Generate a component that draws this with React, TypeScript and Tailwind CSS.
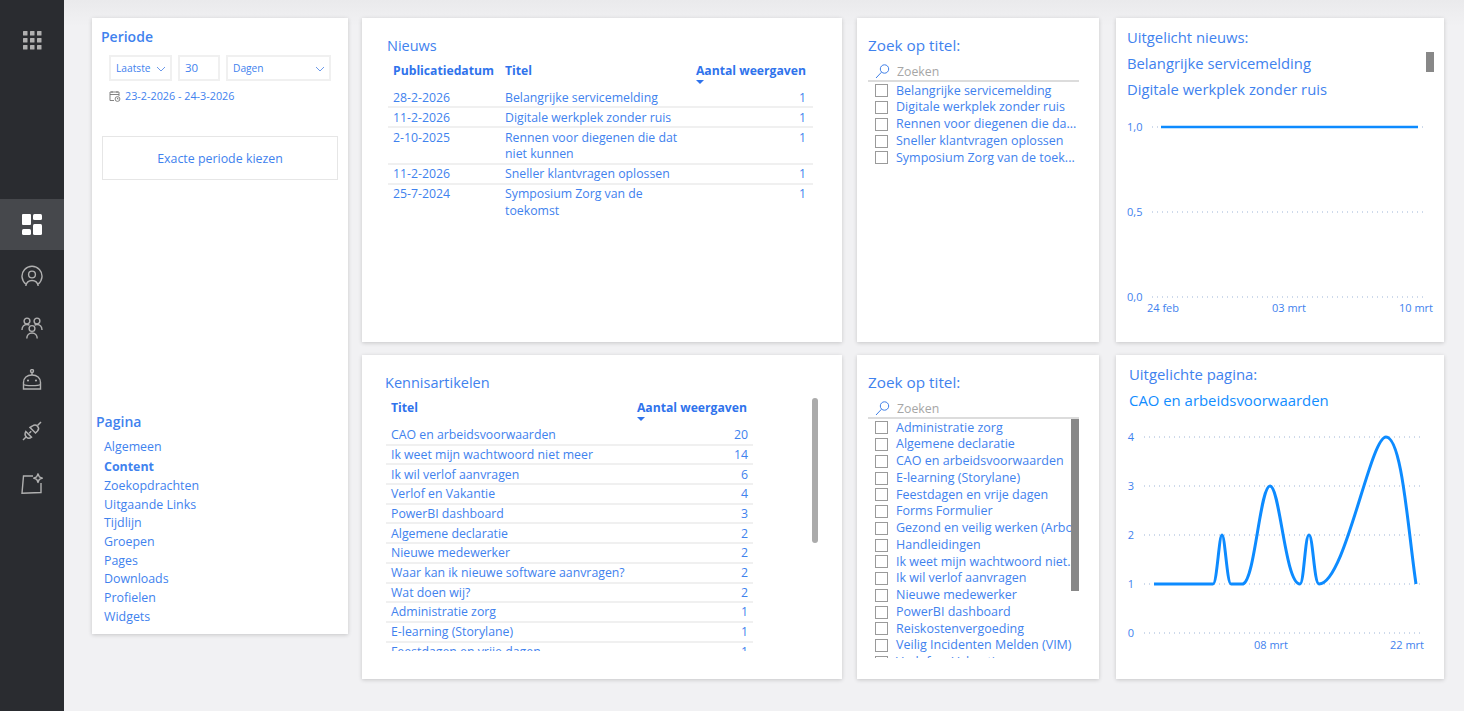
const nieuws = [
  { date: "28-2-2026", title: ["Belangrijke servicemelding"], count: 1 },
  { date: "11-2-2026", title: ["Digitale werkplek zonder ruis"], count: 1 },
  { date: "2-10-2025", title: ["Rennen voor diegenen die dat", "niet kunnen"], count: 1 },
  { date: "11-2-2026", title: ["Sneller klantvragen oplossen"], count: 1 },
  { date: "25-7-2024", title: ["Symposium Zorg van de", "toekomst"], count: 1 },
];

const artikelen: [string, number][] = [
  ["CAO en arbeidsvoorwaarden", 20],
  ["Ik weet mijn wachtwoord niet meer", 14],
  ["Ik wil verlof aanvragen", 6],
  ["Verlof en Vakantie", 4],
  ["PowerBI dashboard", 3],
  ["Algemene declaratie", 2],
  ["Nieuwe medewerker", 2],
  ["Waar kan ik nieuwe software aanvragen?", 2],
  ["Wat doen wij?", 2],
  ["Administratie zorg", 1],
  ["E-learning (Storylane)", 1],
  ["Feestdagen en vrije dagen", 1],
];

const slicerNieuws = [
  "Belangrijke servicemelding",
  "Digitale werkplek zonder ruis",
  "Rennen voor diegenen die da...",
  "Sneller klantvragen oplossen",
  "Symposium Zorg van de toek...",
];

const slicerPaginas = [
  "Administratie zorg",
  "Algemene declaratie",
  "CAO en arbeidsvoorwaarden",
  "E-learning (Storylane)",
  "Feestdagen en vrije dagen",
  "Forms Formulier",
  "Gezond en veilig werken (Arbo)",
  "Handleidingen",
  "Ik weet mijn wachtwoord niet...",
  "Ik wil verlof aanvragen",
  "Nieuwe medewerker",
  "PowerBI dashboard",
  "Reiskostenvergoeding",
  "Veilig Incidenten Melden (VIM)",
  "Verlof en Vakantie",
];

const paginaLinks = ["Zoekopdrachten", "Uitgaande Links", "Tijdlijn", "Groepen", "Pages", "Downloads", "Profielen", "Widgets"];

function Sidebar() {
  return (
    <aside className="w-16 shrink-0 h-full bg-[#2a2c30] flex flex-col items-center">
      <div className="h-[199px] w-full flex justify-center pt-[30px]">
        <svg width="20" height="20" viewBox="0 0 20 20" fill="#b0b0b0">
          {[1, 8, 15].map((y) =>
            [1, 8, 15].map((x) => <rect key={`${x}-${y}`} x={x} y={y} width="4.5" height="4.5" rx="0.5" />)
          )}
        </svg>
      </div>
      <div className="h-[51px] w-full bg-[#46484c] flex items-center justify-center">
        <svg width="20" height="21" viewBox="0 0 20 21" fill="#fff">
          <rect x="0" y="0" width="9" height="11" rx="1" />
          <rect x="0" y="15" width="9" height="6" rx="1.5" />
          <rect x="11" y="0" width="9" height="6" rx="1.5" />
          <rect x="11" y="10" width="9" height="11" rx="1.5" />
        </svg>
      </div>
      <div className="flex flex-col items-center gap-[30px] pt-[15px]">
        <svg width="22" height="22" viewBox="0 0 22 22" fill="none" stroke="#b0b0b0" strokeWidth="1.4">
          <path d="M5 19.200A10 10 0 1 1 17 19.200" />
          <circle cx="11" cy="9.500" r="3.400" />
          <path d="M4.800 21c.6-3.600 3-5.500 6.200-5.500s5.600 1.900 6.200 5.500" />
        </svg>
        <svg width="22" height="22" viewBox="0 0 22 22" fill="none" stroke="#b0b0b0" strokeWidth="1.4">
          <circle cx="6" cy="4" r="2.900" />
          <circle cx="16" cy="4" r="2.900" />
          <circle cx="11" cy="11.500" r="2.900" />
          <path d="M1 13c0-3.200 2-5.500 5-5.500 1 0 1.800.2 2.500.7M21 13c0-3.200-2-5.500-5-5.500-1 0-1.800.2-2.500.7" />
          <path d="M5.800 21.500c0-3.200 2.200-5.500 5.200-5.500s5.200 2.300 5.200 5.500" />
        </svg>
        <svg width="20" height="21" viewBox="0 0 20 21" fill="none" stroke="#b0b0b0" strokeWidth="1.4">
          <circle cx="10" cy="2" r="1.500" />
          <path d="M10 3.500v2.500" />
          <path d="M1.500 20v-6.500C1.500 9 5 6 10 6s8.500 3 8.500 7.500V20z" />
          <path d="M1.500 15.500c2 1.500 15 1.500 17 0" />
          <path d="M6 11.500v.01M14 11.500v.01" strokeWidth="2.200" strokeLinecap="round" />
        </svg>
        <svg className="mt-[1px]" width="20" height="20" viewBox="0 0 20 20" fill="none" stroke="#b0b0b0" strokeWidth="1.500">
          <path d="M1 19 4.500 15.500" />
          <path d="M3.800 10.500 9.500 16.200c-1.800 1.300-3.800 1.200-5 0-1.300-1.300-1.800-3.700-.7-5.700z" />
          <path d="M8 6.500l5.500 5.500 2-2c1.500-1.700 1.300-3.500 0-4.800-1.300-1.300-3.300-1.500-5-.2z" />
          <path d="M15.500 4.500 19 1M7.200 12.200l2-2" />
        </svg>
        <svg className="mt-[2px]" width="22" height="21" viewBox="0 0 22 21" fill="none" stroke="#b0b0b0" strokeWidth="1.400">
          <path d="M12 3H2.500L1 20.200 20 19.500V10" />
          <path d="M17 0.800l1.300 3 3 1.300-3 1.300-1.300 3-1.300-3-3-1.300 3-1.300z" strokeLinejoin="round" />
        </svg>
      </div>
    </aside>
  );
}

function Select({ label, className }: { label: string; className: string }) {
  return (
    <div className={`h-[26px] border-2 border-[#f0f0f0] flex items-center justify-between pl-[5px] pr-[4px] pt-[1px] text-[10.200px] ${className}`}>
      <span>{label}</span>
      <svg width="10" height="6" viewBox="0 0 10 6" fill="none" stroke="#5b8fe8" strokeWidth="0.9">
        <path d="M1 1l4 4 4-4" />
      </svg>
    </div>
  );
}

function FilterPanel() {
  return (
    <section className="w-[256px] h-[616px] shrink-0 bg-white shadow-[0_1px_4px_rgba(0,0,0,0.18)]">
      <div className="pl-[9px] pt-[10px] text-[14px] leading-[18px] font-semibold">Periode</div>
      <div className="flex gap-[6px] pl-[17px] mt-[9px]">
        <Select label="Laatste" className="w-[63px]" />
        <div className="w-[42px] h-[26px] border-2 border-[#f0f0f0] flex items-center px-[5px] text-[11.500px]">30</div>
        <Select label="Dagen" className="w-[105px]" />
      </div>
      <div className="flex items-center gap-[4px] pl-[17px] mt-[7px] h-[16px] text-[10.800px]">
        <svg width="12" height="12" viewBox="0 0 12 12" fill="none" stroke="#777" strokeWidth="0.9">
          <path d="M5 10.500H1V2h9v4M1 4.500h9M3 1v2M8 1v2" />
          <circle cx="8.500" cy="9" r="2.400" />
          <path d="M8.500 7.800V9h1" />
        </svg>
        <span>23-2-2026 - 24-3-2026</span>
      </div>
      <div className="mx-[10px] mt-[32px] h-[44px] border-[1.500px] border-[#e6e6e6] flex items-center justify-center text-[12.400px] pt-[2px]">
        Exacte periode kiezen
      </div>
      <div className="pl-[4px] mt-[233px] text-[14px] leading-[18px] font-semibold">Pagina</div>
      <ul className="pl-[12px] mt-[5px] text-[12.400px]">
        <li className="h-[21px] leading-[21px]">Algemeen</li>
        <li className="h-[20px] leading-[20px] font-bold">Content</li>
        {paginaLinks.map((link) => (
          <li key={link} className="h-[18.700px] leading-[18.700px]">{link}</li>
        ))}
      </ul>
    </section>
  );
}

function SortCaret() {
  return <span className="block w-0 h-0 border-x-[4px] border-x-transparent border-t-[4px] border-t-[#2f73ec] mt-[1px]" />;
}

function NieuwsPanel() {
  return (
    <section className="bg-white shadow-[0_1px_4px_rgba(0,0,0,0.18)] pl-[26px] pr-[29px] pt-[18px]">
      <h2 className="-ml-[1px] text-[14.500px] leading-[19px]">Nieuws</h2>
      <div className="flex text-[12.200px] font-bold text-[#2f73ec] h-[33px] pt-[7.500px] pl-[5px] pr-[7px] leading-[16px] whitespace-nowrap">
        <span className="w-[112px]">Publicatiedatum</span>
        <span className="w-[191px]">Titel</span>
        <span>
          Aantal weergaven
          <SortCaret />
        </span>
      </div>
      <div className="text-[12.300px] leading-[16.500px]">
        {nieuws.map((row, i) => (
          <div key={i} className="flex pl-[5px] pr-[7px] pt-[1.500px] border-b-2 border-[#f0f0f0] last:border-b-0">
            <span className="w-[112px]">{row.date}</span>
            <span className="flex-1">
              {row.title.map((line) => (
                <span key={line} className="block">{line}</span>
              ))}
            </span>
            <span>{row.count}</span>
          </div>
        ))}
      </div>
    </section>
  );
}

function KennisPanel() {
  return (
    <section className="bg-white shadow-[0_1px_4px_rgba(0,0,0,0.18)] pl-[24px] pt-[18px] relative">
      <h2 className="-ml-[1px] text-[14.500px] leading-[19px]">Kennisartikelen</h2>
      <div className="w-[367px]">
        <div className="flex justify-between text-[12.200px] font-bold text-[#2f73ec] h-[34px] pt-[8px] pl-[5px] pr-[6px] leading-[16px] whitespace-nowrap">
          <span>Titel</span>
          <span>
            Aantal weergaven
            <SortCaret />
          </span>
        </div>
        <div className="h-[225px] overflow-hidden text-[12.300px] leading-[16.500px]">
          {artikelen.map(([title, count]) => (
            <div key={title} className="flex justify-between px-[5px] pt-[1.200px] border-b-2 border-[#f0f0f0]">
              <span>{title}</span>
              <span>{count}</span>
            </div>
          ))}
        </div>
      </div>
      <div className="absolute left-[450px] top-[43px] w-[6px] h-[145px] rounded-[3px] bg-[#ababab]" />
    </section>
  );
}

function Slicer({ items, scroll }: { items: string[]; scroll?: boolean }) {
  return (
    <section className="bg-white shadow-[0_1px_4px_rgba(0,0,0,0.18)] pl-[11px] pt-[17px] relative">
      <h2 className="text-[15.300px] leading-[20px]">Zoek op titel:</h2>
      <div className="w-[211px] h-[19px] mt-[8px] border-b-2 border-[#dcdcdc] flex items-center pl-[7px] gap-[7px] text-[12.300px] text-[#a6a6a6]">
        <svg width="15" height="15" viewBox="0 0 15 15" fill="none" stroke="#3f7fe8" strokeWidth="1">
          <circle cx="9.500" cy="5" r="4.200" />
          <path d="M6.500 8.200 1 14" />
        </svg>
        <span className="pt-[2px]">Zoeken</span>
      </div>
      <div className={`w-[211px] overflow-hidden text-[12.500px] pt-[0.500px] relative ${scroll ? "h-[239px]" : ""}`}>
        {items.map((item) => (
          <div key={item} className="flex items-center h-[16.750px] pl-[7px]">
            <span className="w-[13px] h-[13px] border border-[#9a9a9a] shrink-0" />
            <span className="ml-[8px] whitespace-nowrap">{item}</span>
          </div>
        ))}
        {scroll && <div className="absolute right-0 top-0 w-[8px] h-[172px] bg-[#888888]" />}
      </div>
    </section>
  );
}

function DottedLines({ ys, x1, x2 }: { ys: number[]; x1: number; x2: number }) {
  return (
    <>
      {ys.map((y) => (
        <line key={y} x1={x1} x2={x2} y1={y} y2={y} stroke="#9db4d6" strokeWidth="1" strokeDasharray="1 4" />
      ))}
    </>
  );
}

function NieuwsChart() {
  return (
    <svg width="328" height="214" viewBox="0 0 328 214" className="block" fontSize="11" fill="#3f82ee">
      <DottedLines ys={[9, 94, 179]} x1={36} x2={310} />
      <path d="M45 9H302" stroke="#0d8bff" strokeWidth="2.500" fill="none" />
      <text x="11" y="13">1,0</text>
      <text x="11" y="98">0,5</text>
      <text x="11" y="183">0,0</text>
      <text x="47" y="194" textAnchor="middle">24 feb</text>
      <text x="173" y="194" textAnchor="middle">03 mrt</text>
      <text x="300" y="194" textAnchor="middle">10 mrt</text>
    </svg>
  );
}

function PaginaChart() {
  return (
    <svg width="328" height="240" viewBox="0 0 328 240" className="block" fontSize="11" fill="#3f82ee">
      <DottedLines ys={[17, 66, 115, 164, 213]} x1={28} x2={305} />
      <path
        d="M38 164H97C101 164 103 115 106 115C109 115 111 164 115 164H127C139 160 144 66 154 66C164 66 169 164 184 164C188 164 189 115 193 115C197 115 198 164 203 164C229 164 254 17 270 17C286 17 292 110 300 164"
        stroke="#0d8bff"
        strokeWidth="3"
        fill="none"
      />
      <text x="15" y="21" textAnchor="middle">4</text>
      <text x="15" y="70" textAnchor="middle">3</text>
      <text x="15" y="119" textAnchor="middle">2</text>
      <text x="15" y="168" textAnchor="middle">1</text>
      <text x="15" y="217" textAnchor="middle">0</text>
      <text x="155" y="229" textAnchor="middle">08 mrt</text>
      <text x="291" y="229" textAnchor="middle">22 mrt</text>
    </svg>
  );
}

function NieuwsCard() {
  return (
    <section className="ml-[2px] bg-white shadow-[0_1px_4px_rgba(0,0,0,0.18)] relative">
      <div className="pl-[11px] pt-[6px] text-[14.800px] leading-[26px] h-[100px]">
        <p className="h-[26px]">Uitgelicht nieuws:</p>
        <p className="h-[26px]">Belangrijke servicemelding</p>
        <p className="h-[26px]">Digitale werkplek zonder ruis</p>
      </div>
      <NieuwsChart />
      <div className="absolute left-[310px] top-[34px] w-[8px] h-[20px] bg-[#888888]" />
    </section>
  );
}

function PaginaCard() {
  return (
    <section className="ml-[2px] bg-white shadow-[0_1px_4px_rgba(0,0,0,0.18)]">
      <div className="pl-[13px] pt-[6px] text-[14.900px] leading-[26px] h-[65px]">
        <p className="h-[26px]">Uitgelichte pagina:</p>
        <p className="h-[26px] text-[#118dff]">CAO en arbeidsvoorwaarden</p>
      </div>
      <PaginaChart />
    </section>
  );
}

export default function App() {
  return (
    <div className="flex w-[1464px] h-[711px] overflow-hidden bg-[linear-gradient(#eaeaec,#f1f1f3_26px)] text-[#3f82ee] font-['Open_Sans','Noto_Sans',sans-serif]">
      <Sidebar />
      <main className="flex gap-[14px] pl-[28px] pt-[18px]">
        <FilterPanel />
        <div className="grid grid-cols-[480px_242px_330px] grid-rows-[324px_324px] gap-x-[15px] gap-y-[13px]">
          <NieuwsPanel />
          <Slicer items={slicerNieuws} />
          <NieuwsCard />
          <KennisPanel />
          <Slicer items={slicerPaginas} scroll />
          <PaginaCard />
        </div>
      </main>
    </div>
  );
}
